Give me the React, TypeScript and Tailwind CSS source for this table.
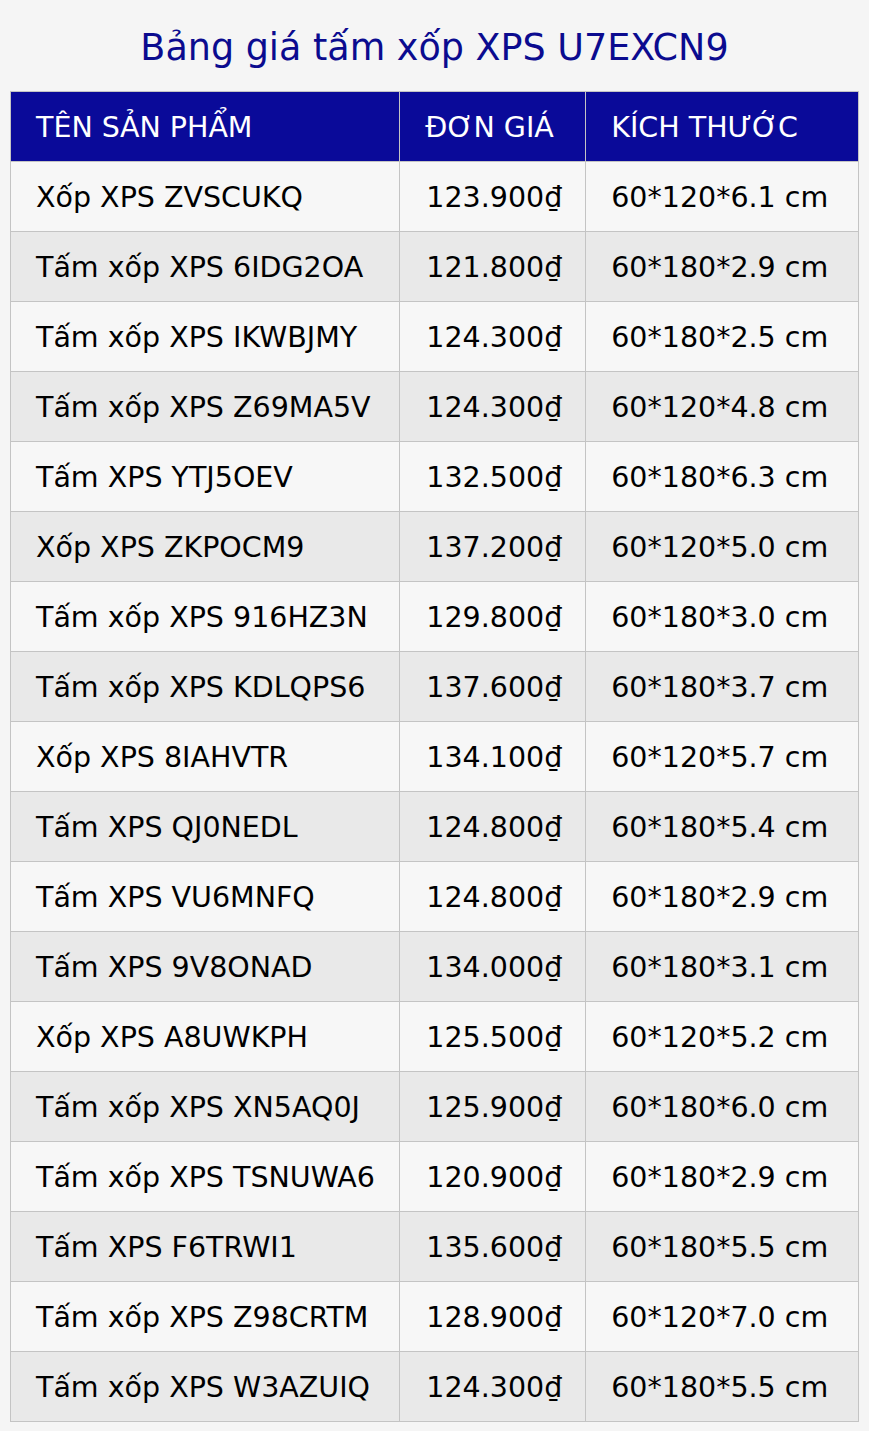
import React from "react";

const rows: [string, string, string][] = [
  ["Xốp XPS ZVSCUKQ", "123.900₫", "60*120*6.1 cm"],
  ["Tấm xốp XPS 6IDG2OA", "121.800₫", "60*180*2.9 cm"],
  ["Tấm xốp XPS IKWBJMY", "124.300₫", "60*180*2.5 cm"],
  ["Tấm xốp XPS Z69MA5V", "124.300₫", "60*120*4.8 cm"],
  ["Tấm XPS YTJ5OEV", "132.500₫", "60*180*6.3 cm"],
  ["Xốp XPS ZKPOCM9", "137.200₫", "60*120*5.0 cm"],
  ["Tấm xốp XPS 916HZ3N", "129.800₫", "60*180*3.0 cm"],
  ["Tấm xốp XPS KDLQPS6", "137.600₫", "60*180*3.7 cm"],
  ["Xốp XPS 8IAHVTR", "134.100₫", "60*120*5.7 cm"],
  ["Tấm XPS QJ0NEDL", "124.800₫", "60*180*5.4 cm"],
  ["Tấm XPS VU6MNFQ", "124.800₫", "60*180*2.9 cm"],
  ["Tấm XPS 9V8ONAD", "134.000₫", "60*180*3.1 cm"],
  ["Xốp XPS A8UWKPH", "125.500₫", "60*120*5.2 cm"],
  ["Tấm xốp XPS XN5AQ0J", "125.900₫", "60*180*6.0 cm"],
  ["Tấm xốp XPS TSNUWA6", "120.900₫", "60*180*2.9 cm"],
  ["Tấm XPS F6TRWI1", "135.600₫", "60*180*5.5 cm"],
  ["Tấm xốp XPS Z98CRTM", "128.900₫", "60*120*7.0 cm"],
  ["Tấm xốp XPS W3AZUIQ", "124.300₫", "60*180*5.5 cm"],
];

export default function App() {
  return (
    <div
      className="min-h-[1431px] bg-[#f5f5f5] px-[10px] pt-[23px]"
      style={{ fontFamily: '"DejaVu Sans", Verdana, sans-serif' }}
    >
      <h1 className="text-center text-[36.5px] leading-[50px] text-[#0b0b8f] mb-[18px]">
        Bảng giá tấm xốp XPS U7EXCN9
      </h1>
      <table className="w-[849px] border-collapse text-[28.5px]">
        <colgroup>
          <col className="w-[390px]" />
          <col className="w-[186px]" />
          <col className="w-[273px]" />
        </colgroup>
        <thead>
          <tr className="h-[70px] bg-[#0a0a99] text-white">
            <th className="border border-[#c4c4c4] pl-[25px] pt-[3px] text-left font-normal">TÊN SẢN PHẨM</th>
            <th className="border border-[#c4c4c4] pl-[25px] pt-[3px] text-left font-normal">ĐƠN GIÁ</th>
            <th className="border border-[#c4c4c4] pl-[25px] pt-[3px] text-left font-normal">KÍCH THƯỚC</th>
          </tr>
        </thead>
        <tbody>
          {rows.map((r, i) => (
            <tr key={i} className={`h-[70px] text-black ${i % 2 === 0 ? "bg-[#f7f7f7]" : "bg-[#e9e9e9]"}`}>
              <td className="border border-[#c4c4c4] pl-[25px] pt-[3px]">{r[0]}</td>
              <td className="border border-[#c4c4c4] pl-[26px] pt-[3px]">{r[1]}</td>
              <td className="border border-[#c4c4c4] pl-[25px] pt-[3px]">{r[2]}</td>
            </tr>
          ))}
        </tbody>
      </table>
    </div>
  );
}
